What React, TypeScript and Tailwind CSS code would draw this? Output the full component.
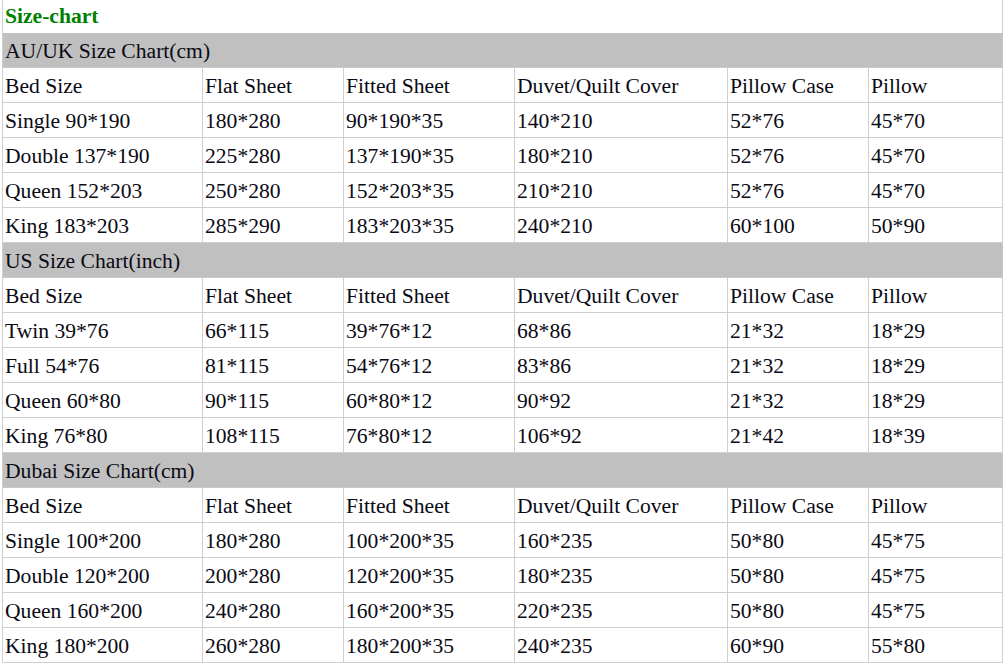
const COLS = ['w-[200px]', 'w-[141px]', 'w-[171px]', 'w-[213px]', 'w-[141px]', 'w-[134px]'];

const HEAD = ['Bed Size', 'Flat Sheet', 'Fitted Sheet', 'Duvet/Quilt Cover', 'Pillow Case', 'Pillow'];

const CHARTS: { title: string; rows: string[][] }[] = [
  {
    title: 'AU/UK Size Chart(cm)',
    rows: [
      ['Single 90*190', '180*280', '90*190*35', '140*210', '52*76', '45*70'],
      ['Double 137*190', '225*280', '137*190*35', '180*210', '52*76', '45*70'],
      ['Queen 152*203', '250*280', '152*203*35', '210*210', '52*76', '45*70'],
      ['King 183*203', '285*290', '183*203*35', '240*210', '60*100', '50*90'],
    ],
  },
  {
    title: 'US Size Chart(inch)',
    rows: [
      ['Twin 39*76', '66*115', '39*76*12', '68*86', '21*32', '18*29'],
      ['Full 54*76', '81*115', '54*76*12', '83*86', '21*32', '18*29'],
      ['Queen 60*80', '90*115', '60*80*12', '90*92', '21*32', '18*29'],
      ['King 76*80', '108*115', '76*80*12', '106*92', '21*42', '18*39'],
    ],
  },
  {
    title: 'Dubai Size Chart(cm)',
    rows: [
      ['Single 100*200', '180*280', '100*200*35', '160*235', '50*80', '45*75'],
      ['Double 120*200', '200*280', '120*200*35', '180*235', '50*80', '45*75'],
      ['Queen 160*200', '240*280', '160*200*35', '220*235', '50*80', '45*75'],
      ['King 180*200', '260*280', '180*200*35', '240*235', '60*90', '55*80'],
    ],
  },
];

function Row({ cells }: { cells: string[] }) {
  return (
    <div className="flex h-[35px] border-b border-[#cfcfcf]">
      {cells.map((c, i) => (
        <div
          key={i}
          className={`${COLS[i]} shrink-0 flex items-center pl-[2px] pt-[3px] border-r border-[#cfcfcf] whitespace-nowrap`}
        >
          {c}
        </div>
      ))}
    </div>
  );
}

export default function App() {
  return (
    <div className="bg-white min-h-[667px] w-[1006px] pl-[2px]">
      <div
        className="w-[1001px] border-l border-[#cfcfcf] text-[21.6px] leading-none text-[#0a0a14]"
        style={{ fontFamily: '"Liberation Serif", "Times New Roman", serif' }}
      >
        <div className="h-[33px] flex items-center pl-[2px] border-r border-[#cfcfcf]">
          <span className="font-bold text-[#008000]">Size-chart</span>
        </div>
        {CHARTS.map((chart) => (
          <div key={chart.title}>
            <div className="h-[35px] flex items-center pl-[2px] pt-[3px] bg-[#c0c0c0] border-r border-b border-[#c8c8c8]">
              {chart.title}
            </div>
            <Row cells={HEAD} />
            {chart.rows.map((r) => (
              <Row key={r[0]} cells={r} />
            ))}
          </div>
        ))}
      </div>
    </div>
  );
}
